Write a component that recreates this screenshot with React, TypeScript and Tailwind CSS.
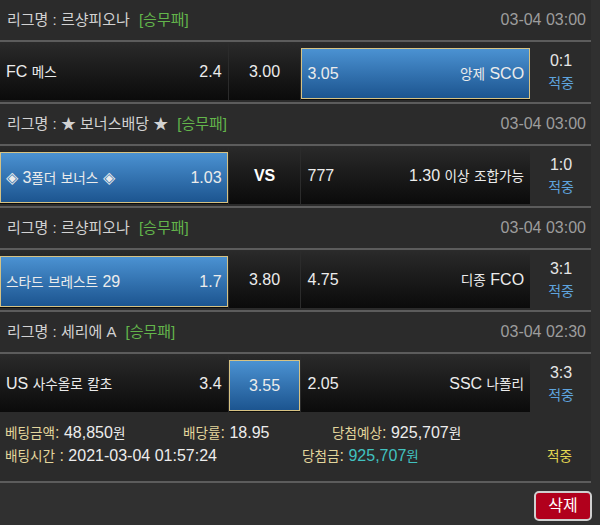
import React from 'react';

type Pick = 'h' | 'd' | 'a';

const games: {
  league: string;
  date: string;
  home: string;
  h: string;
  d: string;
  a: string;
  away: string;
  pick: Pick;
  score: string;
}[] = [
  { league: '르샹피오나', date: '03-04 03:00', home: 'FC 메스', h: '2.4', d: '3.00', a: '3.05', away: '앙제 SCO', pick: 'a', score: '0:1' },
  { league: '★ 보너스배당 ★', date: '03-04 03:00', home: '◈ 3폴더 보너스 ◈', h: '1.03', d: 'VS', a: '777', away: '1.30 이상 조합가능', pick: 'h', score: '1:0' },
  { league: '르샹피오나', date: '03-04 03:00', home: '스타드 브레스트 29', h: '1.7', d: '3.80', a: '4.75', away: '디종 FCO', pick: 'h', score: '3:1' },
  { league: '세리에 A', date: '03-04 02:30', home: 'US 사수올로 칼초', h: '3.4', d: '3.55', a: '2.05', away: 'SSC 나폴리', pick: 'd', score: '3:3' },
];

// hangul runs are drawn a bit smaller than the latin text, like the original
const ko = (s: string) =>
  s.split(/([\uAC00-\uD7A3]+)/).map((p, i) =>
    /[\uAC00-\uD7A3]/.test(p) ? (
      <span key={i} className="text-[0.85em]">
        {p}
      </span>
    ) : (
      p
    )
  );

function Slot({ on, className, children }: { on: boolean; className: string; children: React.ReactNode }) {
  return (
    <div className={`h-full bg-gradient-to-b from-[#2a2a2a] to-[#0b0b0b] ${className}`}>
      {on ? (
        <div className="mt-[5px] h-[51px] flex items-center justify-between px-[5px] border border-[#d6c283] bg-gradient-to-b from-[#4b92d2] to-[#1c5590]">
          {children}
        </div>
      ) : (
        <div className="h-full flex items-center justify-between px-[6px]">{children}</div>
      )}
    </div>
  );
}

function Line() {
  return <div className="h-[2px] bg-[#5c5c5c]" />;
}

export default function App() {
  return (
    <div className="min-h-screen w-[600px] bg-[#303030] font-['Liberation_Sans','Noto_Sans_CJK_KR',sans-serif]">
      <div className="w-[591px] bg-[#2b2b2b]">
        {games.map((g, i) => (
          <div key={i}>
            {i > 0 && <Line />}
            <div className="h-[40px] flex items-center justify-between pl-[7px] pr-[5px]">
              <div className="text-[15px] text-[#d2d2d2]">
                리그명 : {g.league}
                <span className="ml-[9px] text-[#63b54b]">[승무패]</span>
              </div>
              <div className="text-[16px] text-[#9d9d9d]">{g.date}</div>
            </div>
            <Line />
            <div className="h-[60px] flex gap-px pt-px pb-[2px] text-[16px] text-[#ececec]">
              <Slot on={g.pick === 'h'} className="w-[228px]">
                <span>{ko(g.home)}</span>
                <span>{g.h}</span>
              </Slot>
              <Slot on={g.pick === 'd'} className="w-[72px]">
                <span className={`w-full text-center ${g.d === 'VS' ? 'font-bold text-[16px] text-white' : ''}`}>{g.d}</span>
              </Slot>
              <Slot on={g.pick === 'a'} className="w-[229px]">
                <span>{g.a}</span>
                <span>{ko(g.away)}</span>
              </Slot>
              <div className="w-[60px] flex flex-col items-center justify-center leading-[22px]">
                <span className="text-[16px] text-[#e6e6e6]">{g.score}</span>
                <span className="text-[14px] text-[#5ea3dd]">적중</span>
              </div>
            </div>
          </div>
        ))}

        <div className="pt-[8px] pb-[13px] pl-[5px] text-[16px] leading-[22px] text-[#ededed]">
          <div className="flex">
            <span className="w-[178px]">
              <span className="text-[#e3d69c]">{ko('베팅금액')}:</span> 48,850{ko('원')}
            </span>
            <span className="w-[149px]">
              <span className="text-[#e3d69c]">{ko('배당률')}:</span> 18.95
            </span>
            <span>
              <span className="text-[#e3d69c]">{ko('당첨예상')}:</span> 925,707{ko('원')}
            </span>
          </div>
          <div className="flex">
            <span className="w-[297px]">
              <span className="text-[#e3d69c]">{ko('배팅시간')} :</span> 2021-03-04 01:57:24
            </span>
            <span className="w-[245px]">
              <span className="text-[#e3d69c]">{ko('당첨금')}:</span>{' '}
              <span className="text-[#41c2c0]">925,707{ko('원')}</span>
            </span>
            <span className="text-[#e2d552]">{ko('적중')}</span>
          </div>
        </div>
        <Line />
      </div>
      <div className="flex justify-end pt-[8px] pr-[8px] pb-[7px]">
        <button className="w-[58px] h-[30px] rounded-[5px] border-2 border-[#cfcfcf] bg-[#b1001c] text-[16px] text-white">
          삭제
        </button>
      </div>
    </div>
  );
}
